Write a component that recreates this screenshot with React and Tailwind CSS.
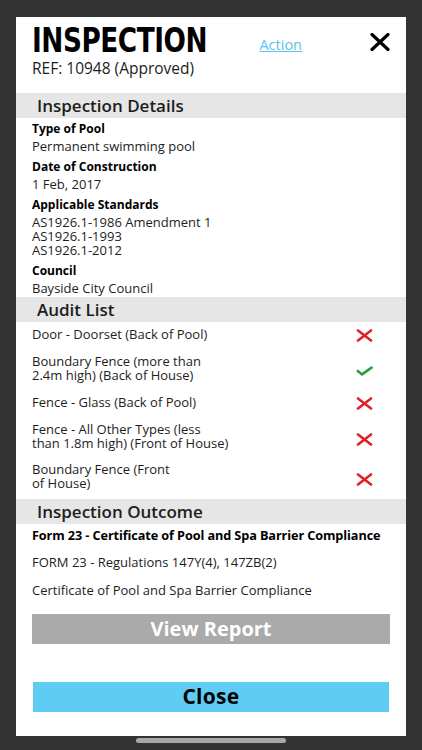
import React from 'react';

const details = [
    { label: 'Type of Pool', values: ['Permanent swimming pool'] },
    { label: 'Date of Construction', values: ['1 Feb, 2017'] },
    { label: 'Applicable Standards', values: ['AS1926.1-1986 Amendment 1', 'AS1926.1-1993', 'AS1926.1-2012'] },
    { label: 'Council', values: ['Bayside City Council'] },
];

const audits = [
    { lines: ['Door - Doorset (Back of Pool)'], pass: false },
    { lines: ['Boundary Fence (more than', '2.4m high) (Back of House)'], pass: true },
    { lines: ['Fence - Glass (Back of Pool)'], pass: false },
    { lines: ['Fence - All Other Types (less', 'than 1.8m high) (Front of House)'], pass: false },
    { lines: ['Boundary Fence (Front', 'of House)'], pass: false },
];

const Cross = () => (
    <svg width="17" height="13" viewBox="0 0 17 13" className="text-[#e0202a]">
        <path d="M2 1.5 L15 11.5 M15 1.5 L2 11.5" stroke="currentColor" strokeWidth="2.6" strokeLinecap="round" />
    </svg>
);

const Check = () => (
    <svg width="17" height="10" viewBox="0 0 17 10" className="text-[#25a244]">
        <path d="M1.8 5 L6 8.4 L15.5 1.6" stroke="currentColor" strokeWidth="2.6" fill="none" strokeLinecap="round" strokeLinejoin="round" />
    </svg>
);

const SectionHeader = ({ children }) => (
    <div className="bg-[#e6e6e6] h-[25px] flex items-center pl-[21px] text-[17px] font-semibold text-[#1d1d1d]">
        {children}
    </div>
);

export default function App() {
    return (
        <div className="h-[750px] w-full bg-[#333333] overflow-hidden relative font-['Open_Sans',sans-serif]">
            {/* Card */}
            <div className="mx-4 mt-[17px] h-[719px] bg-white flex flex-col">
                {/* Header */}
                <div className="flex items-start px-4 pt-[4px] h-[76px]">
                    <div className="flex-1">
                        <h1 className="font-['DejaVu_Sans_Condensed',sans-serif] font-bold text-[34px] leading-[38px] text-black tracking-[-0.5px] origin-left scale-x-[0.86]">
                            INSPECTION
                        </h1>
                        <p className="text-[15.5px] leading-[20px] text-[#1d1d1d] -mt-[1px]">REF: 10948 (Approved)</p>
                    </div>
                    <a className="text-[14.5px] text-[#5bc2ec] underline mt-[13px] mr-[68px]">Action</a>
                    <svg width="20" height="18" viewBox="0 0 20 18" className="mt-[12px]">
                        <path d="M2 1.5 L18 16.5 M18 1.5 L2 16.5" stroke="black" strokeWidth="3.2" strokeLinecap="round" />
                    </svg>
                </div>

                <SectionHeader>Inspection Details</SectionHeader>
                <div className="px-4 pt-[2px] pb-[2px] text-[13px] text-[#1d1d1d]">
                    {details.map((d) => (
                        <div key={d.label} className="mb-[5px] last:mb-0">
                            <div className="font-bold text-[12px] leading-[18px] text-black">{d.label}</div>
                            <div className="leading-[14px] mt-[1px]">
                                {d.values.map((v) => <div key={v}>{v}</div>)}
                            </div>
                        </div>
                    ))}
                </div>

                <SectionHeader>Audit List</SectionHeader>
                <div className="pl-4 pr-[33px] pt-[4px] pb-[9px] text-[13px] text-[#1d1d1d]">
                    {audits.map((a, i) => (
                        <div key={i} className="flex items-center justify-between leading-[14px] mb-[12px] last:mb-0">
                            <div>{a.lines.map((l) => <div key={l}>{l}</div>)}</div>
                            <div className={a.lines.length > 1 ? 'mt-[6px]' : 'mt-[3px]'}>{a.pass ? <Check /> : <Cross />}</div>
                        </div>
                    ))}
                </div>

                <SectionHeader>Inspection Outcome</SectionHeader>
                <div className="px-4 text-[13px] text-[#1d1d1d]">
                    <p className="font-bold text-black mt-[3px] leading-[16px] text-[12.7px] tracking-[-0.1px]">Form 23 - Certificate of Pool and Spa Barrier Compliance</p>
                    <p className="mt-[11px] leading-[16px]">FORM 23 - Regulations 147Y(4), 147ZB(2)</p>
                    <p className="mt-[12px] leading-[16px]">Certificate of Pool and Spa Barrier Compliance</p>
                    <button className="mt-[16px] w-full h-[30px] bg-[#aaaaaa] text-white font-bold text-[20px] flex items-center justify-center">
                        View Report
                    </button>
                </div>

                <div className="px-[17px] mt-[38px]">
                    <button className="w-full h-[30px] bg-[#5fcdf3] text-black font-bold text-[21px] tracking-[0.3px] flex items-center justify-center">
                        Close
                    </button>
                </div>
            </div>
            {/* Home indicator */}
            <div className="mx-auto mt-[2px] w-[150px] h-[5px] rounded-full bg-[#a8a8a8]" />
        </div>
    );
}
